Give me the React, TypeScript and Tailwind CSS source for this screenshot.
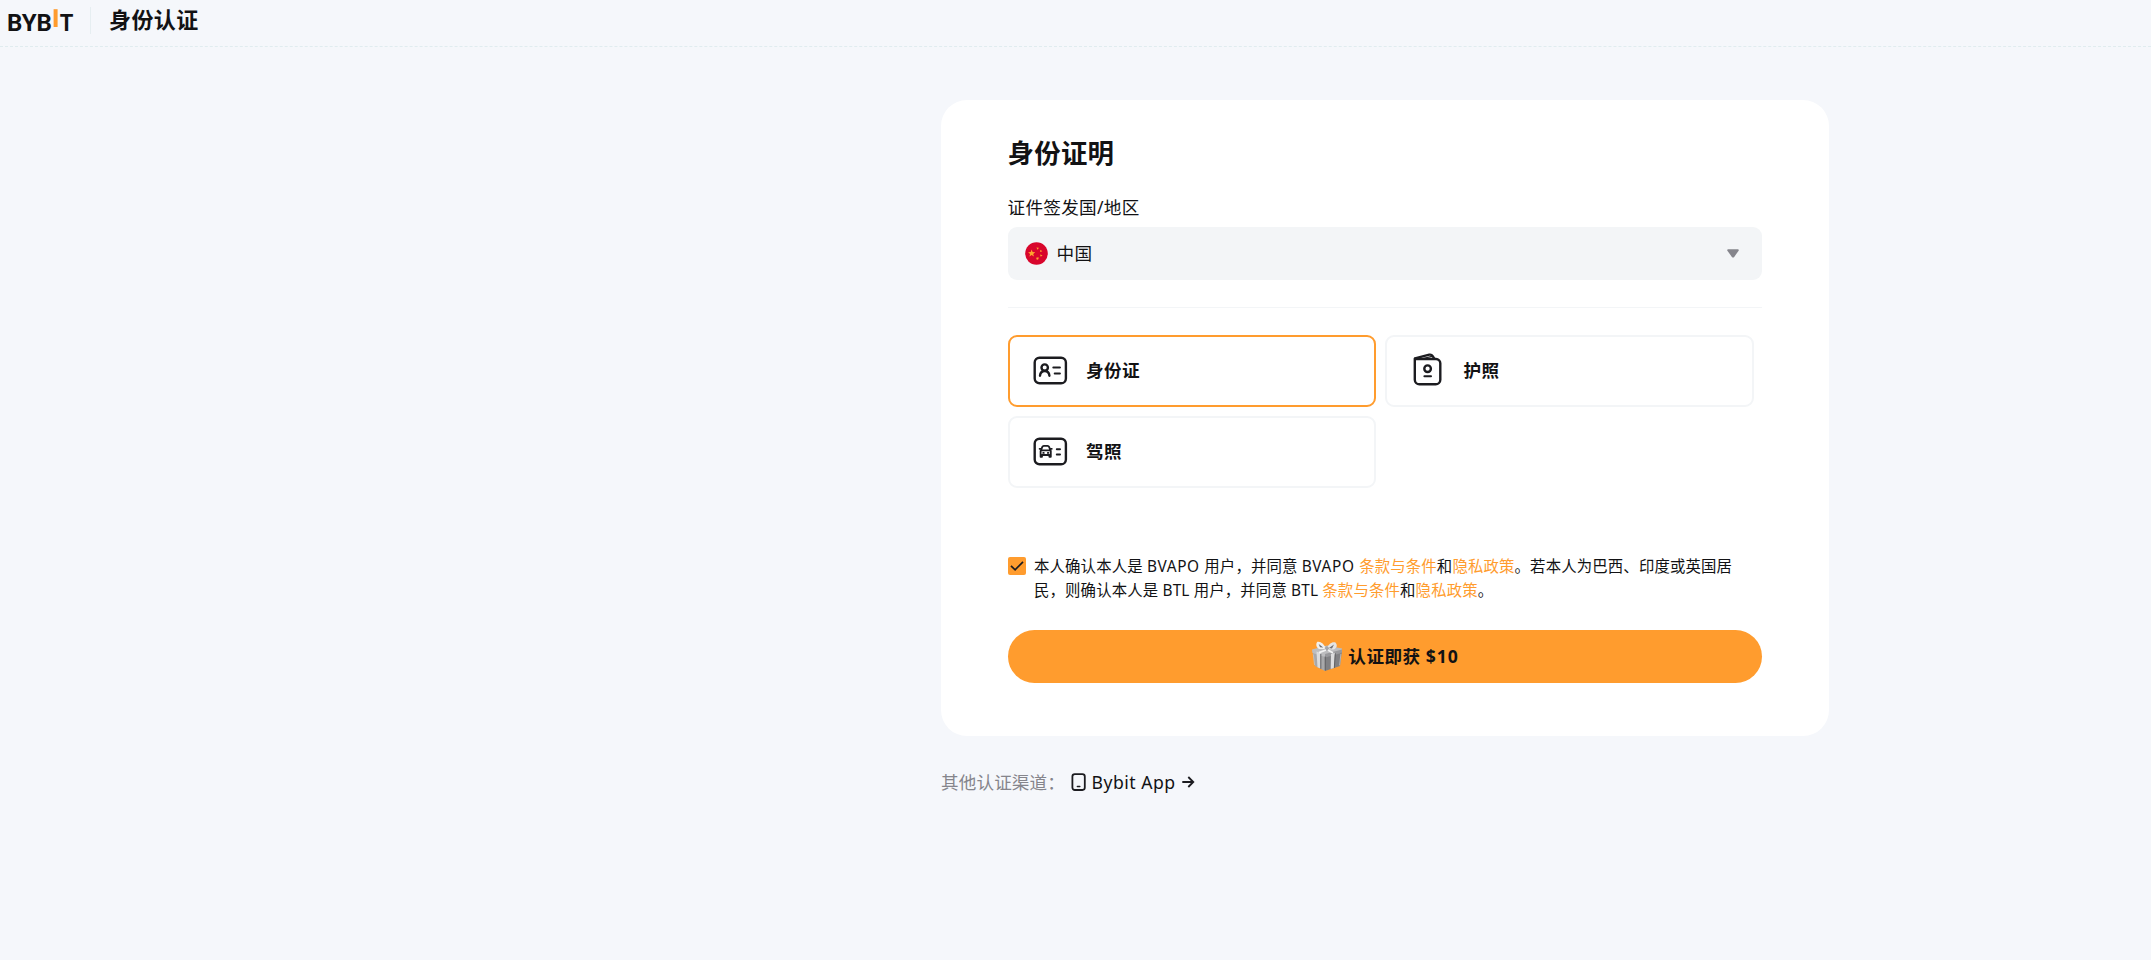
import { useState } from 'react'
import type { ReactNode } from 'react'

const Logo = () => (
  <svg width="68" height="32" viewBox="-2 0 68 32" className="-ml-[2px] block" aria-label="BYBIT">
    <g className="font-['Roboto','Liberation_Sans',sans-serif] text-[24px] font-bold" fill="#121214">
      <text x="-1" y="24" textLength="45" lengthAdjust="spacingAndGlyphs">BYB</text>
      <text x="51.7" y="24" textLength="13.6" lengthAdjust="spacingAndGlyphs">T</text>
    </g>
    <rect x="45.6" y="2.2" width="4" height="17.8" fill="#ff9c2e" />
  </svg>
)

const ChinaFlag = () => (
  <svg width="23" height="23" viewBox="0 0 23 23" aria-hidden="true">
    <circle cx="11.5" cy="11.5" r="11.3" fill="#d8062c" />
    <g fill="#ffa52e">
      <path d="M6.6 7.6l1 2.5 2.6.1-2 1.7.7 2.6-2.3-1.5-2.2 1.5.7-2.6-2-1.7 2.6-.1z" />
      <path d="M11.4 5.4l2.4.4-1.1 2z" />
      <path d="M15.4 7.7l1.9 1.5-2.2.7z" />
      <path d="M15 12.6l2.5.6-1.7 1.6z" />
      <path d="M11.5 15.4l2.4.2-.9 2.1-1.7-.5z" />
    </g>
  </svg>
)

const IdCardIcon = () => (
  <svg width="35" height="35" viewBox="0 0 35 35" fill="none" stroke="#1c1c20" strokeWidth="2.4" strokeLinecap="round">
    <rect x="1.7" y="4.8" width="31.2" height="25.4" rx="4.8" />
    <circle cx="11.7" cy="14.6" r="3.2" />
    <path d="M7 22.7c.3-3.1 1.9-4.7 4.7-4.7s4.4 1.6 4.7 4.7" />
    <path d="M20.3 14.5h6.6M21.7 20.5h5.2" strokeWidth="2" />
  </svg>
)

const PassportIcon = () => (
  <svg width="35" height="35" viewBox="0 0 35 35" fill="none" stroke="#1c1c20" strokeWidth="2.4" strokeLinecap="round" strokeLinejoin="round">
    <path d="M4 6h21a4.3 4.3 0 0 1 4.3 4.3v16.4a4.6 4.6 0 0 1-4.6 4.6H8.4a4.6 4.6 0 0 1-4.6-4.6V6Z" />
    <path d="M4 5.3L18.3 1.7c1.3-.3 2.6.2 3.4 1.4L23.3 5.6" />
    <path d="M12 5.5L21 3.3" strokeWidth="1.2" />
    <circle cx="16.6" cy="15.7" r="3.3" />
    <path d="M13.4 23.3h6.6" strokeWidth="2" />
  </svg>
)

const LicenseIcon = () => (
  <svg width="35" height="35" viewBox="0 0 35 35" fill="none" stroke="#1c1c20" strokeWidth="2.4" strokeLinecap="round" strokeLinejoin="round">
    <rect x="1.7" y="4.8" width="31.2" height="25.4" rx="4.8" />
    <g strokeWidth="1.8">
      <path d="M8 16.3l1.3-3.4c.3-.7.8-1 1.5-1h3.8c.7 0 1.2.3 1.5 1l1.3 3.4H8Z" />
      <path d="M7.6 17v5.8h1.4v-1.8h7.4v1.8h1.4V17M6.6 14.8h1.2M17.6 14.8h1.2M10.2 18.9h.6M14.8 18.9h.6" />
    </g>
    <path d="M23.8 15.2h3.2M23.8 20.4h3.2" strokeWidth="2" />
  </svg>
)

const GiftIcon = () => (
  <svg width="32" height="32" viewBox="0 0 32 32" aria-hidden="true">
    <path d="M1.5 11L14 16v15L4 26z" fill="#a8a8aa" />
    <path d="M14 16l17-5-2 15-15 5z" fill="#808083" />
    <path d="M1 9.5l15-4 15 3-.3 3.5L14 17 1.5 13z" fill="#bdbdbf" />
    <path d="M14 14l17-4.5-.3 3.5L14 17.5z" fill="#98989b" />
    <path d="M5.5 11.5l4 1.5v15.6l-3-1.4zM20 14l4-1.2-1 15.2-3.3 1.1z" fill="#dcdcdd" />
    <path d="M9.8 14v14.8M14.2 16.5v14M24.3 13.3L23.3 28" stroke="#5b5b5e" strokeWidth=".9" />
    <path d="M2.3 14.4L3.6 25M29.9 14L28.6 25.4" stroke="#c4c4c6" strokeWidth=".8" />
    <path d="M15.5 9L8 9C5 7.5 4.6 4 6.3 1.8 9.5 1 12.7 3.5 15.5 9Z" fill="#f0f0f0" />
    <path d="M15.5 9c2-5 5.4-7.5 9-6.5 2.6 3 .8 6.4-2.3 7z" fill="#e4e4e4" />
    <path d="M9 7.2L7.7 4l4.6 3.5zM18 8l5-3.6-2 4z" fill="#6e6e72" />
    <path d="M13.5 8l2.4-2 2.5 2.3-2.5 3z" fill="#a5a5a8" />
    <path d="M15 10l-7 2.6M17 10l5 3" stroke="#f3f3f3" strokeWidth="1.8" />
  </svg>
)

const PhoneIcon = () => (
  <svg width="16" height="20" viewBox="0 0 16 20" fill="none" stroke="#1c1c20" strokeWidth="1.8" strokeLinecap="round">
    <rect x="1.4" y="2.2" width="12.4" height="15.8" rx="2.4" />
    <path d="M6.4 14.6h2.4" strokeWidth="1.5" />
  </svg>
)

const ArrowIcon = () => (
  <svg width="14" height="14" viewBox="0 0 14 14" fill="none" stroke="#1c1c20" strokeWidth="1.8">
    <path d="M1.3 7h10.8M7.3 2l5 5-5 5" />
  </svg>
)

type DocType = { id: string; label: string; icon: ReactNode }

const docTypes: DocType[] = [
  { id: 'id', label: '身份证', icon: <IdCardIcon /> },
  { id: 'passport', label: '护照', icon: <PassportIcon /> },
  { id: 'license', label: '驾照', icon: <LicenseIcon /> },
]

const TermsLink = ({ children }: { children: ReactNode }) => (
  <a href="#" className="text-[#ff9c2e]">
    {children}
  </a>
)

const App = () => {
  const [selected, setSelected] = useState('id')
  const [agreed, setAgreed] = useState(true)

  return (
    <div className="min-h-screen bg-[#f5f7fb] font-['Noto_Sans','Noto_Sans_CJK_SC',sans-serif] text-[17.6px] text-[#121214]">
      <header className="flex h-[47px] items-start border-b border-dashed border-[#e0ecef] pl-2 pt-[7px]">
        <Logo />
        <div className="ml-4 h-[27px] w-px bg-[#e6eef1]" />
        <h1 className="-mt-1 ml-[18px] text-[22px] font-bold leading-[33px] tracking-[0.4px]">身份认证</h1>
      </header>

      <main className="ml-[941px] w-[888px] pt-[53px]">
        <section className="h-[636px] rounded-[26px] bg-white pl-[66.5px] pr-[67px] pt-[33px]">
          <h2 className="text-[26.4px] font-bold leading-10 tracking-[0.3px]">身份证明</h2>
          <p className="mt-[21px] leading-[26px] tracking-[0.3px]">证件签发国/地区</p>
          <button className="mt-[7px] flex h-[53px] w-full items-center rounded-[9px] bg-[#f3f5f7] pl-[17.5px] pr-[23px]">
            <ChinaFlag />
            <span className="ml-[8.5px] tracking-[0.4px]">中国</span>
            <svg className="ml-auto" width="12" height="9" viewBox="0 0 12 9">
              <path d="M1.2.3h9.6c1 0 1.3.8.8 1.5L7.2 7.9c-.6.8-1.7.8-2.3 0L.4 1.8C-.1 1.1.2.3 1.2.3Z" fill="#85858c" />
            </svg>
          </button>

          <div className="mt-[27px] border-t border-[#f3f5f7]" />

          <div className="mt-[26.5px] flex flex-wrap gap-[9px]">
            {docTypes.map((doc) => (
              <button
                key={doc.id}
                onClick={() => setSelected(doc.id)}
                className={`flex h-[72px] w-[368.5px] items-center rounded-[9px] border-2 pl-[23.5px] font-semibold ${
                  selected === doc.id ? 'border-[#ff9c2e]' : 'border-[#f3f5f7]'
                }`}
              >
                {doc.icon}
                <span className="ml-[18px] tracking-[0.4px]">{doc.label}</span>
              </button>
            ))}
          </div>

          <div className="mt-[67.5px] flex items-start">
            <button
              role="checkbox"
              aria-checked={agreed}
              onClick={() => setAgreed(!agreed)}
              className="mt-[2px] flex size-[18px] shrink-0 items-center justify-center rounded-[2px] bg-[#ff9c2e]"
            >
              {agreed && (
                <svg width="14" height="12" viewBox="0 0 14 12" fill="none" stroke="#1c1c20" strokeWidth="1.7">
                  <path d="M1 5.8l4.1 4L13 1.8" />
                </svg>
              )}
            </button>
            <p className="ml-[8.5px] whitespace-nowrap text-[15.4px] leading-[24.2px] tracking-[0.15px]">
              本人确认本人是 <span className="tracking-[0.6px]">BVAPO </span>用户，并同意 <span className="tracking-[0.6px]">BVAPO </span>
              <TermsLink>条款与条件</TermsLink>和<TermsLink>隐私政策</TermsLink>。若本人为巴西、印度或英国居
              <br />
              民，则确认本人是 BTL 用户，并同意 BTL <TermsLink>条款与条件</TermsLink>和<TermsLink>隐私政策</TermsLink>。
            </p>
          </div>

          <button className="mt-[26.5px] flex h-[53px] w-full items-center justify-center rounded-full bg-[#ff9c2e] font-bold">
            <GiftIcon />
            <span className="ml-[5.5px] tracking-[0.5px]">
              认证即获 <span className="tracking-[0.9px]">$10</span>
            </span>
          </button>
        </section>

        <div className="mt-[33px] flex h-[27px] items-center">
          <span className="tracking-[0.12px] text-[#85858c]">其他认证渠道：</span>
          <a href="#" className="ml-[6px] flex items-center">
            <PhoneIcon />
            <span className="ml-[4.5px] mr-[5.5px] tracking-[0.5px]">Bybit App</span>
            <ArrowIcon />
          </a>
        </div>
      </main>
    </div>
  )
}

export default App
